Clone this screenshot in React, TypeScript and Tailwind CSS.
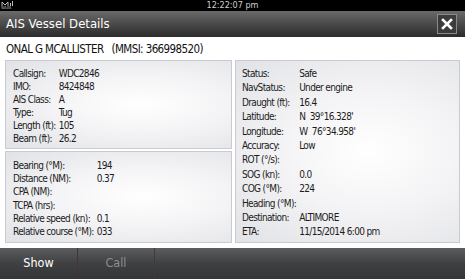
import React from 'react';

const font = { fontFamily: '"DejaVu Sans Condensed", "DejaVu Sans", sans-serif' };

type Row = [string, string];

const vesselRows: Row[] = [
  ['Callsign:', 'WDC2846'],
  ['IMO:', '8424848'],
  ['AIS Class:', 'A'],
  ['Type:', 'Tug'],
  ['Length (ft):', '105'],
  ['Beam (ft):', '26.2'],
];

const relativeRows: Row[] = [
  ['Bearing (°M):', '194'],
  ['Distance (NM):', '0.37'],
  ['CPA (NM):', ''],
  ['TCPA (hrs):', ''],
  ['Relative speed (kn):', '0.1'],
  ['Relative course (°M):', '033'],
];

const statusRows: Row[] = [
  ['Status:', 'Safe'],
  ['NavStatus:', 'Under engine'],
  ['Draught (ft):', '16.4'],
  ['Latitude:', 'N  39°16.328\''],
  ['Longitude:', 'W  76°34.958\''],
  ['Accuracy:', 'Low'],
  ['ROT (°/s):', ''],
  ['SOG (kn):', '0.0'],
  ['COG (°M):', '224'],
  ['Heading (°M):', ''],
  ['Destination:', 'ALTIMORE'],
  ['ETA:', '11/15/2014 6:00 pm'],
];

function Panel({ className, children }: { className: string; children: React.ReactNode }) {
  return (
    <div
      className={`border border-[#c9cbd0] bg-[radial-gradient(ellipse_at_60%_50%,#ffffff_0%,#f4f4f6_45%,#e1e2e6_100%)] ${className}`}
    >
      {children}
    </div>
  );
}

function Rows({ rows, cols, lineHeight }: { rows: Row[]; cols: string; lineHeight: string }) {
  return (
    <div className={`grid ${cols} gap-x-[3px] whitespace-nowrap text-[10px] tracking-[-0.65px] text-[#1c1c1c] ${lineHeight}`}>
      {rows.map(([label, value]) => (
        <React.Fragment key={label}>
          <span>{label}</span>
          <span className="whitespace-pre">{value}</span>
        </React.Fragment>
      ))}
    </div>
  );
}

export default function App() {
  return (
    <div className="w-[465px] h-[279px] overflow-hidden flex flex-col bg-[#f7f7f8] font-stretch-condensed" style={font}>
      {/* Status bar */}
      <div className="h-[11px] bg-black relative flex items-center justify-center">
        <div className="absolute left-[1px] top-0 flex flex-col items-start leading-none">
          <svg width="13" height="6" viewBox="0 0 13 6">
            <path d="M1 6 L1 2 L4 5 L7 2 L7 6" stroke="#bbb" strokeWidth="1" fill="none" />
            <rect x="9" y="3" width="1" height="3" fill="#bbb" />
            <rect x="11" y="1" width="1" height="5" fill="#bbb" />
          </svg>
          <span className="text-[4px] text-[#bbb] tracking-tight">WAAS</span>
        </div>
        <span className="text-[9px] leading-none text-[#cfcfcf]">12:22:07 pm</span>
      </div>

      {/* Title bar */}
      <div className="h-[26px] flex items-center justify-between pl-[6px] pr-[8px] bg-gradient-to-b from-[#6a6a6a] via-[#4a4a4a] to-[#2c2c2c]">
        <span className="text-[13px] text-white">AIS Vessel Details</span>
        <div className="w-[20px] h-[20px] border border-[#8a8a8a] bg-[#3c3c3c] flex items-center justify-center">
          <svg width="12" height="12" viewBox="0 0 12 12">
            <path d="M2 2 L10 10 M10 2 L2 10" stroke="#ffffff" strokeWidth="2.6" strokeLinecap="square" />
          </svg>
        </div>
      </div>

      {/* Content */}
      <div className="flex-1 flex flex-col px-[5px] bg-white">
        <div className="h-[23px] flex items-center pl-[1px] pt-[2px] text-[11.5px] tracking-[-0.6px] text-[#111] whitespace-pre">
          ONAL G MCALLISTER   (MMSI: 366998520)
        </div>
        <div className="flex gap-[3px] h-[183px]">
          <div className="w-[227px] flex flex-col gap-[2px]">
            <Panel className="h-[89px] pl-[7px] pt-[6px]">
              <Rows rows={vesselRows} cols="grid-cols-[minmax(41px,auto)_1fr]" lineHeight="leading-[13px]" />
            </Panel>
            <Panel className="flex-1 pl-[7px] pt-[7px]">
              <Rows rows={relativeRows} cols="grid-cols-[minmax(78px,auto)_1fr]" lineHeight="leading-[13.2px]" />
            </Panel>
          </div>
          <Panel className="flex-1 pl-[6px] pt-[6px]">
            <Rows rows={statusRows} cols="grid-cols-[minmax(52px,auto)_1fr]" lineHeight="leading-[14.4px]" />
          </Panel>
        </div>
        <div className="flex-1" />
      </div>

      {/* Bottom bar */}
      <div className="h-[31px] flex items-center bg-gradient-to-b from-[#5c5d60] via-[#3f4042] to-[#343537]">
        <div className="w-[78px] h-full flex items-center justify-center text-[12.5px] text-white border-r border-[#4a3236]">
          Show
        </div>
        <div className="w-[77px] h-full flex items-center justify-center text-[12.5px] text-[#8e8e90] border-r border-[#45363a]">
          Call
        </div>
      </div>
    </div>
  );
}
